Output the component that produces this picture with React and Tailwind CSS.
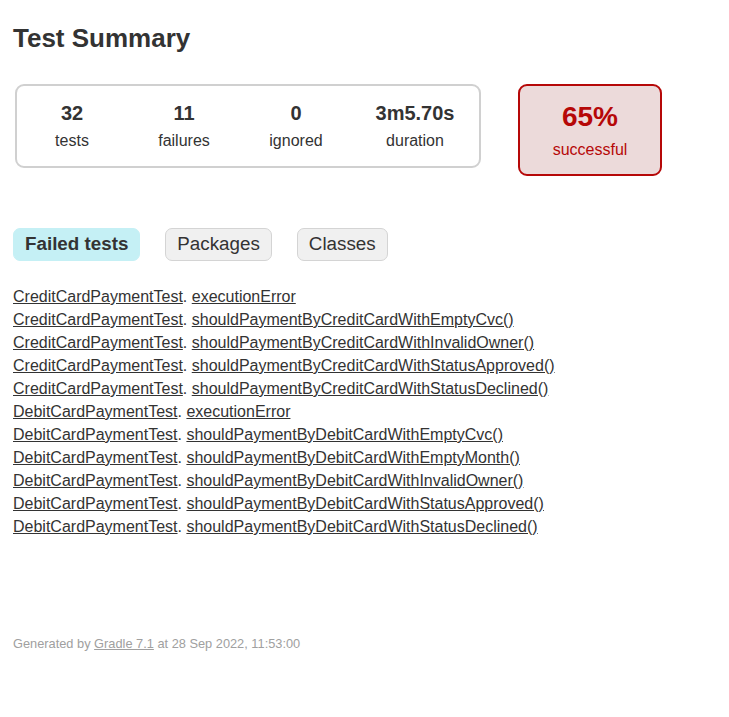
const FAILED = [
  ['CreditCardPaymentTest', 'executionError'],
  ['CreditCardPaymentTest', 'shouldPaymentByCreditCardWithEmptyCvc()'],
  ['CreditCardPaymentTest', 'shouldPaymentByCreditCardWithInvalidOwner()'],
  ['CreditCardPaymentTest', 'shouldPaymentByCreditCardWithStatusApproved()'],
  ['CreditCardPaymentTest', 'shouldPaymentByCreditCardWithStatusDeclined()'],
  ['DebitCardPaymentTest', 'executionError'],
  ['DebitCardPaymentTest', 'shouldPaymentByDebitCardWithEmptyCvc()'],
  ['DebitCardPaymentTest', 'shouldPaymentByDebitCardWithEmptyMonth()'],
  ['DebitCardPaymentTest', 'shouldPaymentByDebitCardWithInvalidOwner()'],
  ['DebitCardPaymentTest', 'shouldPaymentByDebitCardWithStatusApproved()'],
  ['DebitCardPaymentTest', 'shouldPaymentByDebitCardWithStatusDeclined()'],
];

const STATS = [
  { value: '32', label: 'tests', w: 'w-[110px]' },
  { value: '11', label: 'failures', w: 'w-[110px]' },
  { value: '0', label: 'ignored', w: 'w-[110px]' },
  { value: '3m5.70s', label: 'duration', w: 'w-[124px]' },
];

export default function App() {
  return (
    <div className="min-h-[717px] bg-white px-[13px] text-[#333] font-['Liberation_Sans',Arial,sans-serif]">
      <h1 className="pt-[25px] text-[26px] leading-none font-bold">Test Summary</h1>

      {/* summary */}
      <div className="mt-[33px] flex items-start gap-[37px]">
        <div className="ml-[2px] w-[466px] h-[84px] border-2 border-[#d0d0d0] rounded-[9px] flex gap-[2px] pt-[17px]">
          {STATS.map(s => (
            <div key={s.label} className={`${s.w} flex flex-col items-center`}>
              <div className="text-[20px] leading-none font-bold">{s.value}</div>
              <div className="mt-[10px] text-[16px] leading-none">{s.label}</div>
            </div>
          ))}
        </div>
        <div className="w-[144px] h-[92px] border-2 border-[#b60808] bg-[#ecdada] rounded-[9px] flex flex-col items-center pt-[17px] text-[#b60808]">
          <div className="text-[28px] leading-none font-bold">65%</div>
          <div className="mt-[11px] text-[16px] leading-none">successful</div>
        </div>
      </div>

      {/* tabs */}
      <div className="mt-[52px] flex gap-[25px] text-[18.8px]">
        <div className="h-[33px] flex items-center px-[11px] border border-[#c5f0f5] bg-[#c5f0f5] rounded-[7px] font-bold">Failed tests</div>
        <div className="h-[33px] flex items-center px-[11px] border border-[#d4d4d4] bg-[#f0f0f0] rounded-[7px]">Packages</div>
        <div className="h-[33px] flex items-center px-[11px] border border-[#d4d4d4] bg-[#f0f0f0] rounded-[7px]">Classes</div>
      </div>

      {/* failed tests */}
      <ul className="mt-[27px] text-[16px] leading-[18px]">
        {FAILED.map(([cls, method], i) => (
          <li key={i} className="pb-[5px] whitespace-nowrap">
            <a href="#" className="underline">{cls}</a>. <a href="#" className="underline">{method}</a>
          </li>
        ))}
      </ul>

      <div className="mt-[95px] text-[12.8px] leading-[15px] text-[#a0a0a0]">
        Generated by <a href="#" className="underline">Gradle 7.1</a> at 28 Sep 2022, 11:53:00
      </div>
    </div>
  );
}
